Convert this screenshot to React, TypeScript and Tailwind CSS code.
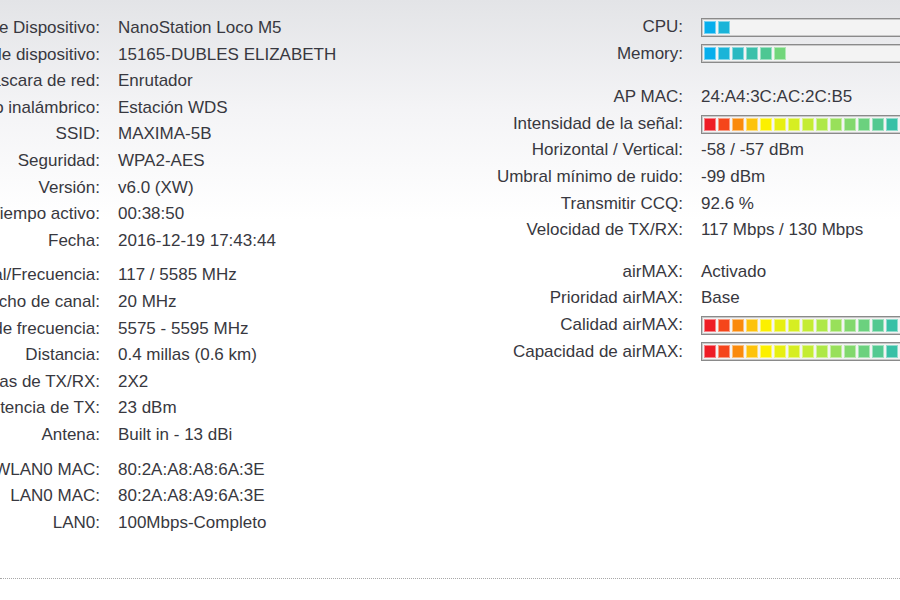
type Row = { label: string; value?: string; bar?: string[] }

const SIGNAL = [
  '#ee1c25',
  '#f5451b',
  '#fa8a0c',
  '#fdc30b',
  '#fcf000',
  '#e7ef12',
  '#d6ee22',
  '#c4ec33',
  '#aee847',
  '#98e05a',
  '#82d86d',
  '#6bd17e',
  '#53c990',
  '#38c0a6',
  '#1cb9c4',
  '#0fb3d8',
  '#06b0e6',
  '#00aeef',
  '#00aeef',
  '#00aeef',
]

const CPU = ['#07aeec', '#1ab4d8']
const MEMORY = ['#07aeec', '#1ab4d8', '#2bb9c1', '#3bc0aa', '#4dc793', '#72d67b']

const leftGroups: Row[][] = [
  [
    { label: 'Modelo de Dispositivo:', value: 'NanoStation Loco M5' },
    { label: 'Nombre de dispositivo:', value: '15165-DUBLES ELIZABETH' },
    { label: 'Modo de máscara de red:', value: 'Enrutador' },
    { label: 'Modo inalámbrico:', value: 'Estación WDS' },
    { label: 'SSID:', value: 'MAXIMA-5B' },
    { label: 'Seguridad:', value: 'WPA2-AES' },
    { label: 'Versión:', value: 'v6.0 (XW)' },
    { label: 'Tiempo activo:', value: '00:38:50' },
    { label: 'Fecha:', value: '2016-12-19 17:43:44' },
  ],
  [
    { label: 'Canal/Frecuencia:', value: '117 / 5585 MHz' },
    { label: 'Ancho de canal:', value: '20 MHz' },
    { label: 'Banda de frecuencia:', value: '5575 - 5595 MHz' },
    { label: 'Distancia:', value: '0.4 millas (0.6 km)' },
    { label: 'Cadenas de TX/RX:', value: '2X2' },
    { label: 'Potencia de TX:', value: '23 dBm' },
    { label: 'Antena:', value: 'Built in - 13 dBi' },
  ],
  [
    { label: 'WLAN0 MAC:', value: '80:2A:A8:A8:6A:3E' },
    { label: 'LAN0 MAC:', value: '80:2A:A8:A9:6A:3E' },
    { label: 'LAN0:', value: '100Mbps-Completo' },
  ],
]

const rightGroups: Row[][] = [
  [
    { label: 'CPU:', bar: CPU },
    { label: 'Memory:', bar: MEMORY },
  ],
  [
    { label: 'AP MAC:', value: '24:A4:3C:AC:2C:B5' },
    { label: 'Intensidad de la señal:', bar: SIGNAL },
    { label: 'Horizontal / Vertical:', value: '-58 / -57 dBm' },
    { label: 'Umbral mínimo de ruido:', value: '-99 dBm' },
    { label: 'Transmitir CCQ:', value: '92.6 %' },
    { label: 'Velocidad de TX/RX:', value: '117 Mbps / 130 Mbps' },
  ],
  [
    { label: 'airMAX:', value: 'Activado' },
    { label: 'Prioridad airMAX:', value: 'Base' },
    { label: 'Calidad airMAX:', bar: SIGNAL },
    { label: 'Capacidad de airMAX:', bar: SIGNAL },
  ],
]

function Meter({ colors }: { colors: string[] }) {
  return (
    <div className="flex h-[19px] w-[300px] shrink-0 items-center gap-[2px] border border-[#8a8a8a] bg-[#f3f3f3] px-[2px] shadow-[inset_0_0_0_1px_#c9c9c9]">
      {colors.map((c, i) => (
        <span
          key={i}
          className="h-[13px] w-[12px] shrink-0 border border-white/45"
          style={{ backgroundColor: c }}
        />
      ))}
    </div>
  )
}

function InfoRow({ row, labelWidth }: { row: Row; labelWidth: string }) {
  return (
    <div className="flex h-[26.6px] items-center gap-[18px] leading-[26.6px]">
      <div className={`flex shrink-0 justify-end whitespace-nowrap ${labelWidth}`}>
        <span>{row.label}</span>
      </div>
      {row.bar ? (
        <Meter colors={row.bar} />
      ) : (
        <span className="whitespace-nowrap">{row.value}</span>
      )}
    </div>
  )
}

export default function App() {
  return (
    <div className="relative h-[600px] w-[900px] overflow-hidden bg-[linear-gradient(to_bottom,#e3e4e7_0px,#f4f4f6_110px,#ffffff_220px)] font-['Liberation_Sans',Arial,sans-serif] text-[17px] text-[#383840]">
      <div className="flex pt-[14px]">
        <div className="flex w-[483px] shrink-0 flex-col gap-[8px] pt-[1px]">
          {leftGroups.map((g, gi) => (
            <div key={gi}>
              {g.map((r) => (
                <InfoRow key={r.label} row={r} labelWidth="w-[100px]" />
              ))}
            </div>
          ))}
        </div>
        <div className="flex flex-col">
          <div>
            {rightGroups[0].map((r) => (
              <InfoRow key={r.label} row={r} labelWidth="w-[200px]" />
            ))}
          </div>
          <div className="mt-[17px]">
            {rightGroups[1].map((r) => (
              <InfoRow key={r.label} row={r} labelWidth="w-[200px]" />
            ))}
          </div>
          <div className="mt-[15px]">
            {rightGroups[2].map((r) => (
              <InfoRow key={r.label} row={r} labelWidth="w-[200px]" />
            ))}
          </div>
        </div>
      </div>
      <div className="mt-[42px] border-t border-dotted border-[#a8a8a8]" />
    </div>
  )
}
